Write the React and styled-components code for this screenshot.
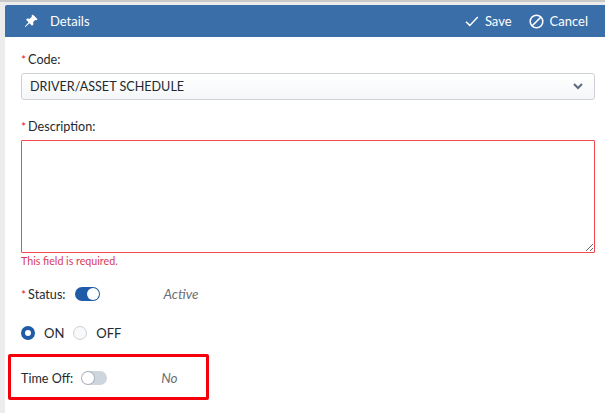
import styled, { createGlobalStyle } from "styled-components";
import { useState } from "react";

const Global = createGlobalStyle`
  html, body { margin: 0; padding: 0; background: #ffffff; }
  body { font-family: "Lato", "Liberation Sans", sans-serif; font-size: 13px; color: #24292f; }
`;

function Pin() {
  return (
    <svg width="14" height="14" viewBox="0 0 14 14" fill="#ffffff">
      <path d="M8.8 0.6 L13.6 5.2 L12.4 6.2 L11.2 6 L9.2 8 L9.4 10.6 L8 11.8 L5.6 9.2 L1.4 13 L0.8 12.4 L4.6 8.2 L2 5.8 L3.2 4.6 L5.8 4.8 L7.8 2.8 L7.6 1.6 Z" />
    </svg>
  );
}

function Check() {
  return (
    <svg width="14" height="11" viewBox="0 0 14 11" fill="none" stroke="#ffffff" strokeWidth="1.5">
      <path d="M1 5.8 L4.8 9.4 L12.8 1" />
    </svg>
  );
}

function Ban() {
  return (
    <svg width="15" height="15" viewBox="0 0 15 15" fill="none" stroke="#ffffff" strokeWidth="1.6">
      <circle cx="7.5" cy="7.5" r="6.3" />
      <path d="M3.2 11.8 L11.8 3.2" />
    </svg>
  );
}

function Chevron() {
  return (
    <svg width="10" height="7" viewBox="0 0 10 7" fill="none" stroke="#5a6b7f" strokeWidth="2">
      <path d="M1 1 L5 5 L9 1" />
    </svg>
  );
}

export default function App() {
  const [descricao, setDescricao] = useState("");

  return (
    <Page>
      <Global />
      <Panel>
        <Header>
          <Titulo>
            <Pin />
            <span>Details</span>
          </Titulo>
          <Acoes>
            <Acao><Check />Save</Acao>
            <Acao><Ban />Cancel</Acao>
          </Acoes>
        </Header>
        <Corpo>
          <Label><Req>*</Req>Code:</Label>
          <Select>
            <span>DRIVER/ASSET SCHEDULE</span>
            <Chevron />
          </Select>
          <DescLabel><Req>*</Req>Description:</DescLabel>
          <TextArea value={descricao} onChange={(e) => setDescricao(e.target.value)} />
          <Erro>This field is required.</Erro>
          <ToggleRow>
            <FieldName><Req>*</Req>Status:</FieldName>
            <Toggle $on />
            <Valor $gap={64}>Active</Valor>
          </ToggleRow>
          <RadioRow>
            <Radio $on />
            <RadioText>ON</RadioText>
            <Radio />
            <RadioText>OFF</RadioText>
          </RadioRow>
          <TimeRow>
            <FieldName>Time Off:</FieldName>
            <Toggle />
            <Valor $gap={54}>No</Valor>
          </TimeRow>
        </Corpo>
      </Panel>
      <Destaque />
    </Page>
  );
}

const Page = styled.div`
  position: relative;
  width: 605px;
  height: 413px;
  overflow: hidden;
  background: #ececec;
  border-top: 2px solid #c9c9c9;
  padding: 3px 0 0 5px;
  box-sizing: border-box;
`;

const Panel = styled.div`
  background: #ffffff;
  height: 408px;
  border-top-left-radius: 2px;
  overflow: hidden;
`;

const Header = styled.div`
  height: 32px;
  background: #3a6ea8;
  color: #ffffff;
  display: flex;
  align-items: center;
  justify-content: space-between;
  padding: 0 17px 0 19px;
`;

const Titulo = styled.div`
  display: flex;
  align-items: center;
  gap: 12px;
`;

const Acoes = styled.div`
  display: flex;
  align-items: center;
  gap: 17px;
`;

const Acao = styled.div`
  display: flex;
  align-items: center;
  gap: 6px;
`;

const Corpo = styled.div`
  padding: 15px 10px 0 16px;
  display: flex;
  flex-direction: column;
  font-size: 12.6px;
`;

const Label = styled.div`
  line-height: 16px;
  height: 16px;
`;

const DescLabel = styled(Label)`
  margin-top: 19px;
`;

const Req = styled.span`
  color: #e0202a;
  margin-right: 2px;
  font-size: 12px;
`;

const Select = styled.div`
  margin-top: 5px;
  height: 27px;
  box-sizing: border-box;
  border: 1px solid #cdd1d6;
  border-radius: 3px;
  background: linear-gradient(#ffffff, #f4f6f8);
  display: flex;
  align-items: center;
  justify-content: space-between;
  padding: 0 11px 0 8px;
`;

const TextArea = styled.textarea`
  display: block;
  margin-top: 5px;
  width: 100%;
  height: 113px;
  box-sizing: border-box;
  border-width: 1px;
  border-style: solid;
  border-color: #f4484e;
  border-radius: 1px;
  background: #ffffff;
  padding: 4px 8px;
  outline: none;
  font: inherit;
`;

const Erro = styled.div`
  margin-top: 1px;
  font-size: 10.7px;
  line-height: 14px;
  color: #d83a5a;
`;

const ToggleRow = styled.div`
  margin-top: 18px;
  display: flex;
  align-items: center;
  height: 16px;
`;

const TimeRow = styled(ToggleRow)`
  margin-top: 29px;
`;

const FieldName = styled.div`
  margin-right: 9px;
`;

const Toggle = styled.div`
  position: relative;
  width: 25px;
  height: 14px;
  border-radius: 7px;
  background: ${(p) => (p.$on ? "#1f5ba6" : "#cfd5dc")};
  &::after {
    content: "";
    position: absolute;
    top: 1px;
    left: ${(p) => (p.$on ? "12px" : "0")};
    width: 12px;
    height: 12px;
    border-radius: 50%;
    background: #ffffff;
    box-shadow: 0 0 0 ${(p) => (p.$on ? "0" : "1px")} #aab2bb;
  }
`;

const Valor = styled.div`
  margin-left: ${(p) => p.$gap}px;
  font-style: italic;
  font-size: 13.5px;
  color: #6b6f75;
`;

const RadioRow = styled.div`
  margin-top: 23px;
  display: flex;
  align-items: center;
  height: 16px;
  font-size: 13px;
`;

const Radio = styled.div`
  width: 14px;
  height: 14px;
  box-sizing: border-box;
  border-radius: 50%;
  background: ${(p) => (p.$on ? "#ffffff" : "#f8f9fa")};
  border: ${(p) => (p.$on ? "4px solid #1f5ba6" : "1px solid #cdd1d6")};
`;

const RadioText = styled.span`
  margin: 0 9px;
`;

const Destaque = styled.div`
  position: absolute;
  left: 8px;
  top: 352px;
  width: 201px;
  height: 46px;
  box-sizing: border-box;
  border: 3px solid #f5000a;
  border-radius: 2px;
  pointer-events: none;
`;
